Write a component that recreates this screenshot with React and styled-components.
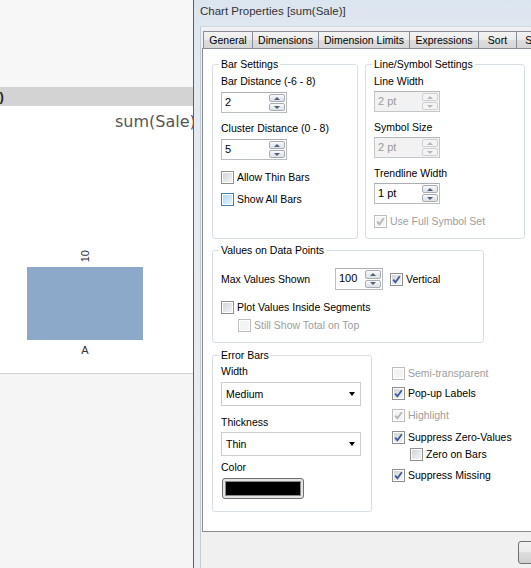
import React from "react";
import styled, { createGlobalStyle } from "styled-components";

const GlobalStyle = createGlobalStyle`
  html, body {
    margin: 0;
    padding: 0;
  }
  body {
    background: #f0f0f0;
    font-family: "Liberation Sans", Arial, sans-serif;
  }
`;

const Screen = styled.div`
  display: flex;
  width: 531px;
  height: 568px;
  overflow: hidden;
`;

/* ---------- sheet behind the dialog ---------- */

const Sheet = styled.div`
  flex: 0 0 193px;
  display: flex;
  flex-direction: column;
  background: #f5f5f5;
  overflow: hidden;
`;

const SheetTop = styled.div`
  height: 87px;
  background: #f7f7f7;
`;

const Caption = styled.div`
  height: 19px;
  background: #d3d3d3;
  font: bold 13px "Liberation Sans", Arial, sans-serif;
  line-height: 19px;
  color: #222;
  text-indent: -12px;
  white-space: nowrap;
  overflow: hidden;
`;

const ChartArea = styled.div`
  height: 267px;
  background: #fff;
  border-bottom: 1px solid #cfcfcf;
  display: flex;
  flex-direction: column;
`;

const ChartTitle = styled.div`
  padding: 7px 0 0 115px;
  font: 16px "DejaVu Sans", sans-serif;
  line-height: 18px;
  color: #555;
  white-space: nowrap;
`;

const BarColumn = styled.div`
  margin: 119px 0 0 27px;
  width: 116px;
  display: flex;
  flex-direction: column;
  align-items: center;
`;

const ValueLabel = styled.div`
  writing-mode: vertical-rl;
  transform: rotate(180deg);
  font: 11px "Liberation Sans", Arial, sans-serif;
  line-height: 12px;
  color: #333;
  margin-bottom: 5px;
`;

const Bar = styled.div`
  width: 116px;
  height: 73px;
  background: #8da9c9;
`;

const CategoryLabel = styled.div`
  margin-top: 4px;
  font: 11px "Liberation Sans", Arial, sans-serif;
  line-height: 13px;
  color: #333;
`;

/* ---------- dialog ---------- */

const Dialog = styled.div`
  flex: 0 0 420px;
  display: flex;
  flex-direction: column;
  border-left: 1px solid #5a5f66;
  background: linear-gradient(#dbe5ef, #e3e9f0 60px, #ebedf0);
  padding-left: 6px;
`;

const TitleBar = styled.div`
  height: 26px;
  flex: 0 0 26px;
  font-size: 11.5px;
  line-height: 22px;
  color: #333;
  white-space: nowrap;
`;

const Client = styled.div`
  flex: 1;
  display: flex;
  flex-direction: column;
  background: #f0f0f0;
  border-left: 1px solid #c3ccd6;
  border-top: 1px solid #d0d8e0;
  padding: 4px 0 0 1px;
  min-height: 0;
`;

const TabStrip = styled.div`
  display: flex;
  align-items: flex-end;
  height: 17px;
  padding-left: 2px;
  white-space: nowrap;
  position: relative;
  z-index: 1;
`;

const Tab = styled.div`
  flex-shrink: 0;
  box-sizing: border-box;
  width: ${(p) => (p.$w ? `${p.$w}px` : "auto")};
  height: ${(p) => (p.$active ? 19 : 17)}px;
  margin-left: -1px;
  margin-bottom: ${(p) => (p.$active ? -1 : 0)}px;
  padding: 0 5px;
  border: 1px solid #898c95;
  border-bottom: none;
  background: ${(p) =>
    p.$active ? "#fff" : "linear-gradient(#f3f3f3, #ebebeb 50%, #dddddd 50%, #d6d6d6)"};
  font-size: 10.5px;
  line-height: 16px;
  color: #000;
  text-align: center;
`;

const Panel = styled.div`
  box-sizing: border-box;
  height: 484px;
  flex: 0 0 484px;
  background: #fff;
  border: 1px solid #898c95;
  padding: 9px 0 0 9px;
  display: flex;
  flex-direction: column;
`;

const Row = styled.div`
  display: flex;
  align-items: flex-start;
  gap: ${(p) => p.$gap || 0}px;
  margin-top: ${(p) => p.$mt || 0}px;
`;

const Group = styled.fieldset`
  box-sizing: border-box;
  margin: 0;
  padding: 0 8px;
  width: ${(p) => p.$w}px;
  height: ${(p) => p.$h}px;
  border: 1px solid #d5dfe5;
  border-radius: 3px;
  display: flex;
  flex-direction: column;
  align-items: flex-start;
  min-width: 0;
`;

const Legend = styled.legend`
  padding: 0 2px;
  margin-left: -2px;
  font-size: 10.5px;
  line-height: 13px;
  color: #000;
`;

const FieldLabel = styled.div`
  margin-top: ${(p) => p.$mt || 0}px;
  width: ${(p) => (p.$w ? `${p.$w}px` : "auto")};
  font-size: 10.5px;
  line-height: 13px;
  color: #000;
  white-space: nowrap;
`;

/* spin box */

const SpinBox = styled.div`
  box-sizing: border-box;
  width: ${(p) => p.$w}px;
  height: ${(p) => p.$h || 21}px;
  margin-top: ${(p) => p.$mt || 0}px;
  margin-right: ${(p) => p.$mr || 0}px;
  display: flex;
  border: 1px solid ${(p) => (p.$disabled ? "#c4c7ca" : "#b9bcc2")};
  border-top-color: ${(p) => (p.$disabled ? "#b4b7ba" : "#abadb3")};
  background: ${(p) => (p.$disabled ? "#f2f2f2" : "#fff")};
  padding: 1px;
`;

const SpinValue = styled.div`
  flex: 1;
  padding-left: 2px;
  font-size: 11px;
  line-height: 17px;
  color: ${(p) => (p.$disabled ? "#9a9a9a" : "#000")};
`;

const SpinButtons = styled.div`
  width: 16px;
  display: flex;
  flex-direction: column;
  gap: 1px;
`;

const SpinButton = styled.div`
  flex: 1;
  display: flex;
  align-items: center;
  justify-content: center;
  border: 1px solid ${(p) => (p.$disabled ? "#cdd0d3" : "#a9adb3")};
  border-radius: 2px;
  background: ${(p) =>
    p.$disabled ? "#f4f4f4" : "linear-gradient(#fbfbfb, #e8eaec 50%, #dfe2e5)"};
`;

const Arrow = styled.span`
  width: 0;
  height: 0;
  border-left: 3px solid transparent;
  border-right: 3px solid transparent;
  ${(p) => (p.$down ? "border-top" : "border-bottom")}: 3px solid
    ${(p) => (p.$disabled ? "#b8b8b8" : "#4c607f")};
`;

const Spin = ({ value, w, h, mt, mr, disabled }) => (
  <SpinBox $w={w} $h={h} $mt={mt} $mr={mr} $disabled={disabled}>
    <SpinValue $disabled={disabled}>{value}</SpinValue>
    <SpinButtons>
      <SpinButton $disabled={disabled}>
        <Arrow $disabled={disabled} />
      </SpinButton>
      <SpinButton $disabled={disabled}>
        <Arrow $down $disabled={disabled} />
      </SpinButton>
    </SpinButtons>
  </SpinBox>
);

/* checkbox */

const CheckRow = styled.div`
  display: flex;
  align-items: center;
  gap: 3px;
  height: 14px;
  margin-top: ${(p) => p.$mt || 0}px;
  margin-left: ${(p) => p.$indent || 0}px;
  font-size: 10.5px;
  color: ${(p) => (p.$disabled ? "#9d9d9d" : "#000")};
  white-space: nowrap;
`;

const Box = styled.span`
  box-sizing: border-box;
  width: 13px;
  height: 13px;
  flex: 0 0 13px;
  display: flex;
  align-items: center;
  justify-content: center;
  border: 1px solid
    ${(p) => (p.$disabled ? "#bcbcbc" : p.$hot ? "#3c7fb1" : "#8e8f8f")};
  box-shadow: inset 0 0 0 1px #fff;
  background: ${(p) =>
    p.$disabled
      ? "#f4f4f4"
      : p.$hot
      ? "linear-gradient(135deg, #a9d7f5, #e6f5fd)"
      : "linear-gradient(135deg, #cfd2d6, #f7f7f7)"};
`;

const Check = ({ label, checked, disabled, hot, mt, indent }) => (
  <CheckRow $mt={mt} $indent={indent} $disabled={disabled}>
    <Box $disabled={disabled} $hot={hot}>
      {checked && (
        <svg width="9" height="9" viewBox="0 0 9 9">
          <path
            d="M1.2 4.6 L3.4 7.2 L7.8 1.2"
            fill="none"
            stroke={disabled ? "#b5b5b5" : "#3f5a94"}
            strokeWidth="1.8"
          />
        </svg>
      )}
    </Box>
    {label}
  </CheckRow>
);

/* drop down + colour */

const Select = styled.div`
  box-sizing: border-box;
  width: 140px;
  height: 24px;
  margin-top: ${(p) => p.$mt || 0}px;
  display: flex;
  align-items: center;
  justify-content: space-between;
  padding: 0 5px 0 4px;
  border: 1px solid #cdcdcd;
  background: #fff;
  font-size: 10.5px;
  color: #000;
`;

const DropArrow = styled.span`
  width: 0;
  height: 0;
  border-left: 3.5px solid transparent;
  border-right: 3.5px solid transparent;
  border-top: 4px solid #000;
`;

const ColorButton = styled.div`
  box-sizing: border-box;
  width: 82px;
  height: 21px;
  margin: 4px 0 0 1px;
  padding: 2px;
  border: 1px solid #707070;
  border-radius: 3px;
  background: #e4e4e4;
  display: flex;
`;

const Swatch = styled.div`
  flex: 1;
  background: ${(p) => p.$color};
  border: 1px solid #8a8a8a;
`;

const SideChecks = styled.div`
  display: flex;
  flex-direction: column;
  padding-top: 17px;
`;

const ValueRow = styled.div`
  display: flex;
  align-items: center;
  margin-top: 11px;
`;

const Footer = styled.div`
  flex: 1;
  padding: 9px 0 0 316px;
  display: flex;
  gap: 6px;
`;

const Button = styled.div`
  box-sizing: border-box;
  width: 75px;
  height: 23px;
  flex-shrink: 0;
  border: 1px solid #707070;
  border-radius: 3px;
  background: linear-gradient(#f2f2f2, #ebebeb 50%, #dddddd 50%, #cfcfcf);
  font-size: 11px;
  line-height: 21px;
  text-align: center;
`;

const tabs = [
  { name: "General", w: 50 },
  { name: "Dimensions", w: 67 },
  { name: "Dimension Limits", w: 92 },
  { name: "Expressions", w: 70 },
  { name: "Sort", w: 39 },
  { name: "Style", w: 42 },
  { name: "Presentation", w: 76, active: true },
  { name: "Axes", w: 38 },
  { name: "Colors", w: 46 },
];

export default function App() {
  return (
    <>
      <GlobalStyle />
      <Screen>
        <Sheet>
          <SheetTop />
          <Caption>(0)</Caption>
          <ChartArea>
            <ChartTitle>sum(Sale)</ChartTitle>
            <BarColumn>
              <ValueLabel>10</ValueLabel>
              <Bar />
              <CategoryLabel>A</CategoryLabel>
            </BarColumn>
          </ChartArea>
        </Sheet>

        <Dialog>
          <TitleBar>Chart Properties [sum(Sale)]</TitleBar>
          <Client>
            <TabStrip>
              {tabs.map((t) => (
                <Tab key={t.name} $w={t.w} $active={t.active}>
                  {t.name}
                </Tab>
              ))}
            </TabStrip>
            <Panel>
              <Row $gap={7}>
                <Group $w={146} $h={181}>
                  <Legend>Bar Settings</Legend>
                  <FieldLabel $mt={4}>Bar Distance (-6 - 8)</FieldLabel>
                  <Spin value="2" w={66} mt={4} />
                  <FieldLabel $mt={9}>Cluster Distance (0 - 8)</FieldLabel>
                  <Spin value="5" w={66} mt={4} />
                  <Check label="Allow Thin Bars" mt={10} />
                  <Check label="Show All Bars" hot mt={8} />
                </Group>
                <Group $w={160} $h={181}>
                  <Legend>Line/Symbol Settings</Legend>
                  <FieldLabel $mt={4}>Line Width</FieldLabel>
                  <Spin value="2 pt" w={66} mt={3} disabled />
                  <FieldLabel $mt={9}>Symbol Size</FieldLabel>
                  <Spin value="2 pt" w={66} mt={3} disabled />
                  <FieldLabel $mt={9}>Trendline Width</FieldLabel>
                  <Spin value="1 pt" w={66} mt={3} />
                  <Check label="Use Full Symbol Set" checked disabled mt={10} />
                </Group>
              </Row>

              <Row $mt={5}>
                <Group $w={272} $h={99}>
                  <Legend>Values on Data Points</Legend>
                  <ValueRow>
                    <FieldLabel $w={114}>Max Values Shown</FieldLabel>
                    <Spin value="100" w={48} h={22} mr={7} />
                    <Check label="Vertical" checked />
                  </ValueRow>
                  <Check label="Plot Values Inside Segments" mt={10} />
                  <Check label="Still Show Total on Top" disabled indent={17} mt={4} />
                </Group>
              </Row>

              <Row $mt={6} $gap={20}>
                <Group $w={160} $h={163}>
                  <Legend>Error Bars</Legend>
                  <FieldLabel $mt={3}>Width</FieldLabel>
                  <Select $mt={4}>
                    Medium
                    <DropArrow />
                  </Select>
                  <FieldLabel $mt={10}>Thickness</FieldLabel>
                  <Select $mt={3}>
                    Thin
                    <DropArrow />
                  </Select>
                  <FieldLabel $mt={5}>Color</FieldLabel>
                  <ColorButton>
                    <Swatch $color="#000" />
                  </ColorButton>
                </Group>
                <SideChecks>
                  <Check label="Semi-transparent" disabled />
                  <Check label="Pop-up Labels" checked mt={6} />
                  <Check label="Highlight" checked disabled mt={8} />
                  <Check label="Suppress Zero-Values" checked mt={8} />
                  <Check label="Zero on Bars" indent={18} mt={3} />
                  <Check label="Suppress Missing" checked mt={7} />
                </SideChecks>
              </Row>
            </Panel>
            <Footer>
              <Button>OK</Button>
              <Button>Cancel</Button>
            </Footer>
          </Client>
        </Dialog>
      </Screen>
    </>
  );
}
